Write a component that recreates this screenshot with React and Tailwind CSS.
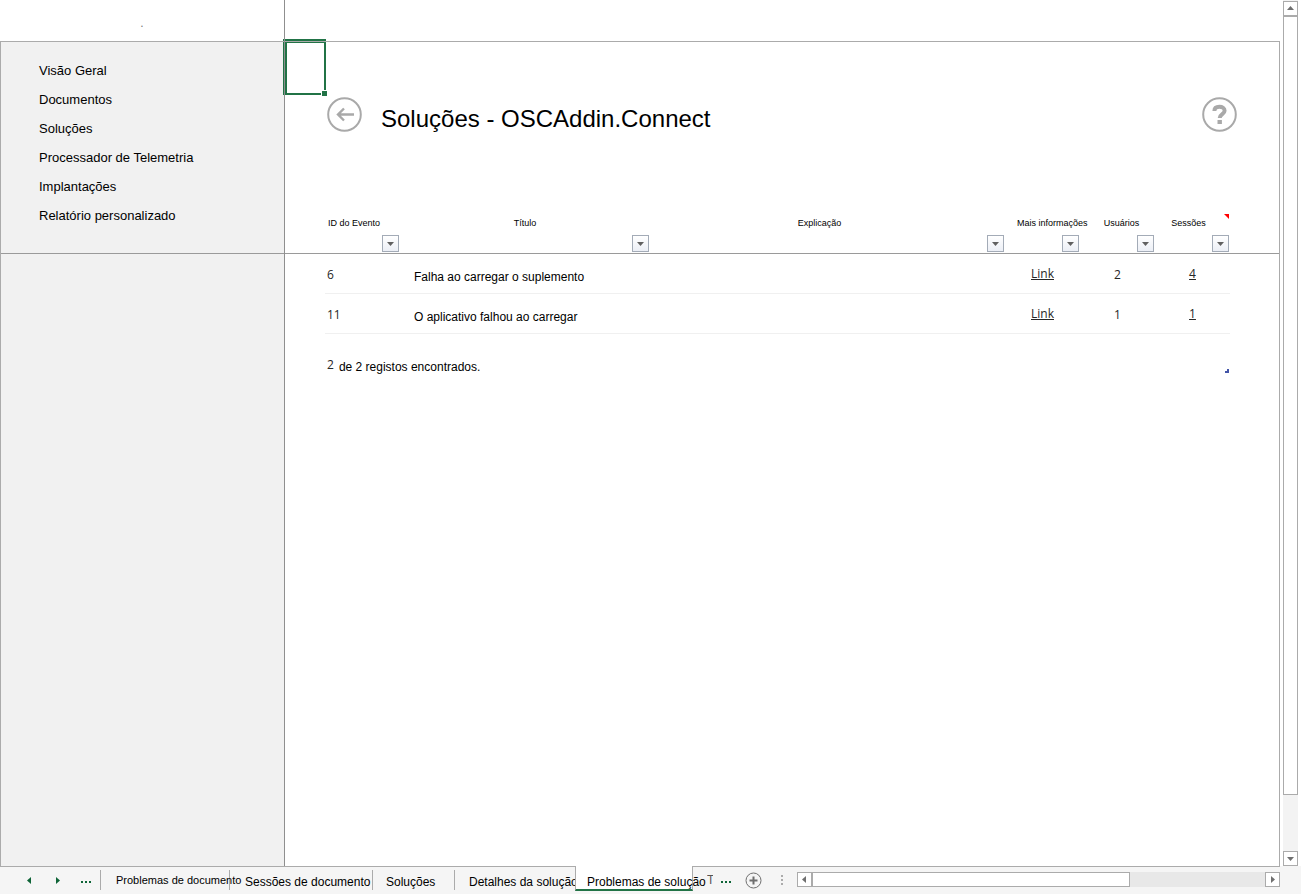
import clsx from 'clsx';

const navItems = [
  'Visão Geral',
  'Documentos',
  'Soluções',
  'Processador de Telemetria',
  'Implantações',
  'Relatório personalizado',
];

const columns = [
  { label: 'ID do Evento', align: 'text-left pl-[3px]' },
  { label: 'Título', align: 'text-center' },
  { label: 'Explicação', align: 'text-center pr-4' },
  { label: 'Mais informações', align: 'text-left pl-3' },
  { label: 'Usuários', align: 'text-center pl-2' },
  { label: 'Sessões', align: 'text-center pr-2' },
];

const rows = [
  { id: 6, title: 'Falha ao carregar o suplemento', users: 2, sessions: 4 },
  { id: 11, title: 'O aplicativo falhou ao carregar', users: 1, sessions: 1 },
];

const tabs = [
  { label: 'Problemas de documento', style: 'w-[129px] pl-[15px] text-[11px] leading-[20px]' },
  { label: 'Sessões de documento', style: 'w-[143px] pl-[15px] text-xs leading-[24px]' },
  { label: 'Soluções', style: 'w-[82px] pl-[13px] text-xs leading-[24px]' },
  { label: 'Detalhes da solução', style: 'w-[120px] pl-[14px] text-xs leading-[24px] border-r-0' },
];

const arrows = {
  up: 'M0 5h7L3.5 1z',
  down: 'M0 2h7L3.5 6z',
  left: 'M5 0v7L1 3.5z',
  right: 'M2 0v7L6 3.5z',
};

function Arrow({ dir, className }) {
  return (
    <svg viewBox="0 0 7 7" className={clsx('h-[7px] w-[7px]', className)} fill="currentColor">
      <path d={arrows[dir]} />
    </svg>
  );
}

function Dots() {
  return (
    <svg viewBox="0 0 10 7" className="h-[7px] w-[10px]" fill="currentColor" shapeRendering="crispEdges">
      <path d="M0 4h2v2H0zM4 4h2v2H4zM8 4h2v2H8z" />
    </svg>
  );
}

function ScrollButton({ dir, label }) {
  return (
    <button
      aria-label={label}
      className="flex h-[15px] w-[15px] shrink-0 items-center justify-center border border-[#ababab] bg-white text-[#6f6f6f]"
    >
      <Arrow dir={dir} />
    </button>
  );
}

function FilterButton({ label }) {
  return (
    <button
      aria-label={`Filtrar ${label}`}
      className="flex h-[17px] w-[17px] items-center justify-center border border-[#a3abb7] bg-linear-to-b from-white to-[#eceff6] text-[#606060]"
    >
      <Arrow dir="down" />
    </button>
  );
}

function Sidebar() {
  return (
    <aside className="flex w-[285px] shrink-0 flex-col border-x border-l-[#ababab] border-r-[#8f8f8f] bg-[#f1f1f1]">
      <nav className="h-[212px] border-b border-[#9a9a9a] pt-[14px] pl-[38px]">
        <ul>
          {navItems.map((item) => (
            <li key={item} className="text-[13px] leading-[29px]">
              <a href="#">{item}</a>
            </li>
          ))}
        </ul>
      </nav>
    </aside>
  );
}

function EventTable() {
  return (
    <table className="w-full table-fixed border-separate border-spacing-0">
      <colgroup>
        <col className="w-[40px]" />
        <col className="w-[75px]" />
        <col className="w-[250px]" />
        <col />
        <col className="w-[75px]" />
        <col className="w-[75px]" />
        <col className="w-[75px]" />
        <col className="w-[49px]" />
      </colgroup>
      <thead>
        <tr>
          <td className="border-b border-[#9a9a9a]" />
          {columns.map((col, i) => (
            <th key={col.label} className="relative border-b border-[#9a9a9a] p-0 pb-px font-normal">
              <div className={clsx('text-[9px] leading-[14px] whitespace-nowrap', col.align)}>{col.label}</div>
              <div className="mt-[5px] flex justify-end pr-px">
                <FilterButton label={col.label} />
              </div>
              {i === columns.length - 1 && (
                // comment indicator
                <svg viewBox="0 0 5 5" className="absolute -top-[2px] right-px h-[5px] w-[5px]" fill="#f00">
                  <path d="M0 0h5v5z" />
                </svg>
              )}
            </th>
          ))}
          <td className="border-b border-[#9a9a9a]" />
        </tr>
      </thead>
      <tbody className="font-['Open_Sans',sans-serif] text-xs text-[#262626]">
        {rows.map((row) => (
          <tr key={row.id} className="h-[40px]">
            <td />
            <td className="border-b border-[#f0f0f0] p-0 pt-[2px] pl-[2px]">{row.id}</td>
            <td className="border-b border-[#f0f0f0] p-0 pt-[6px] pl-[14px] font-['Liberation_Sans',Arial,sans-serif] whitespace-nowrap text-black">
              {row.title}
            </td>
            <td className="border-b border-[#f0f0f0] p-0" />
            <td className="border-b border-[#f0f0f0] p-0 text-center"><a href="#" className="underline">Link</a></td>
            <td className="border-b border-[#f0f0f0] p-0 pt-[2px] text-center">{row.users}</td>
            <td className="border-b border-[#f0f0f0] p-0 text-center"><a href="#" className="underline">{row.sessions}</a></td>
            <td />
          </tr>
        ))}
      </tbody>
      <tfoot className="text-xs">
        <tr className="h-[39px]">
          <td />
          <td colSpan={5} className="p-0 align-bottom">
            <div className="flex h-4 items-start gap-[5px] pl-[2px]">
              <span className="font-['Open_Sans',sans-serif] text-[#262626]">{rows.length}</span>
              <span className="pt-[2px]">de {rows.length} registos encontrados.</span>
            </div>
          </td>
          <td className="p-0 pr-px align-bottom">
            <svg viewBox="0 0 4 4" className="ml-auto h-1 w-1" fill="#4355a8">
              <path d="M2 0h2v4H0V2h2z" />
            </svg>
          </td>
          <td />
        </tr>
      </tfoot>
    </table>
  );
}

function SelectedCell() {
  return (
    <div className="absolute -top-[3px] -left-[2px] h-[56px] w-[43px] border-t-4 border-r-2 border-b-2 border-l-4 border-[#217346]">
      {/* pane lines stay visible over the outline */}
      <span className="absolute -top-[2px] -right-[2px] -left-[4px] h-px bg-[#ababab]" />
      <span className="absolute -top-[4px] -bottom-[2px] -left-[3px] w-px bg-[#8f8f8f]" />
      <span className="absolute -right-[3px] -bottom-[3px] h-[6px] w-[6px] border-t border-l border-white bg-[#217346]" />
    </div>
  );
}

function Report() {
  return (
    <main className="relative min-w-0 flex-1 border-r border-[#ababab]">
      <SelectedCell />
      <header className="flex h-[174px] items-start px-[42px] pt-[55px]">
        <button aria-label="Voltar" className="text-[#a9a9a9]">
          <svg viewBox="0 0 35 35" className="h-[35px] w-[35px]" fill="none" stroke="currentColor" strokeWidth="2">
            <circle cx="17.5" cy="17.5" r="16.3" />
            <path d="M27 17.5H11M17 11.5l-6 6 6 6" strokeWidth="2.4" />
          </svg>
        </button>
        <h1 className="mt-[5px] ml-[19px] text-2xl leading-[34px]">Soluções - OSCAddin.Connect</h1>
        <button aria-label="Ajuda" className="ml-auto text-[#a9a9a9]">
          <svg viewBox="0 0 35 35" className="h-[35px] w-[35px]" fill="none" stroke="currentColor">
            <circle cx="17.5" cy="17.5" r="16.3" strokeWidth="2" />
            <path d="M12.4 14c0-3 2.200-4.200 5-4.200 3 0 5.200 1.400 5.200 3.900 0 3.400-4.900 3.300-4.900 7.300" strokeWidth="4" />
            <path d="M15.500 23h4.400v4h-4.400z" fill="currentColor" stroke="none" />
          </svg>
        </button>
      </header>
      <EventTable />
    </main>
  );
}

function VerticalScrollbar() {
  return (
    <div className="flex w-[15px] shrink-0 flex-col bg-[#f3f3f3] pt-px">
      <ScrollButton dir="up" label="Rolar para cima" />
      <div className="flex-[14] border border-[#ababab] bg-white" />
      <div className="flex-1" />
      <ScrollButton dir="down" label="Rolar para baixo" />
    </div>
  );
}

function SheetBar() {
  return (
    <footer className="flex h-[28px] shrink-0 bg-[#f5f5f5] pr-[21px] whitespace-nowrap">
      <div className="flex border-t border-[#ababab]">
        <div className="mt-[3px] flex h-[20px] w-[101px] items-center border-r border-[#ababab] pl-[26px] text-[#0e6437]">
          <button aria-label="Planilha anterior"><Arrow dir="left" /></button>
          <button aria-label="Próxima planilha" className="ml-[21px]"><Arrow dir="right" /></button>
          <button aria-label="Mais planilhas à esquerda" className="ml-[20px]"><Dots /></button>
        </div>
        {tabs.map((tab) => (
          <button key={tab.label} className={clsx('mt-[3px] h-[20px] border-r border-[#ababab] text-left', tab.style)}>
            {tab.label}
          </button>
        ))}
      </div>
      <button className="relative h-[25px] w-[118px] border-x border-b-2 border-x-[#ababab] border-b-[#217346] bg-white pl-[11px] text-left text-xs leading-[32px]">
        Problemas de solução
      </button>
      <div className="flex min-w-0 flex-1 border-t border-[#ababab]">
        <button className="ml-[14px] h-[26px] w-[6px] overflow-hidden text-left text-xs leading-[26px] text-[#555]">T</button>
        <button aria-label="Mais planilhas à direita" className="ml-[8px] h-[26px] text-[#0e6437]"><Dots /></button>
        <button aria-label="Nova planilha" className="ml-[14px] h-[26px] text-[#6f6f6f]">
          <svg viewBox="0 0 17 17" className="h-[17px] w-[17px]" fill="none" stroke="currentColor">
            <circle cx="8.500" cy="8.500" r="7.500" />
            <path d="M8.500 4.500v8M4.500 8.500h8" strokeWidth="2" />
          </svg>
        </button>
        <svg viewBox="0 0 2 10" className="mt-[8px] ml-[19px] h-[10px] w-[2px]" fill="#ababab">
          <path d="M0 0h2v2H0zM0 4h2v2H0zM0 8h2v2H0z" />
        </svg>
        <div className="mt-[5px] ml-[14px] flex h-[15px] flex-1 bg-[#e8e8e8]">
          <ScrollButton dir="left" label="Rolar para a esquerda" />
          <div className="flex-[7] border border-[#ababab] bg-white" />
          <div className="flex-[3]" />
          <ScrollButton dir="right" label="Rolar para a direita" />
        </div>
      </div>
    </footer>
  );
}

export default function App() {
  return (
    <div className="flex h-screen flex-col bg-white font-['Liberation_Sans',Arial,sans-serif] text-black">
      <div className="flex min-h-0 flex-1 gap-[3px] pr-[3px]">
        <div className="flex min-w-0 flex-1 flex-col">
          <div className="h-[41px] w-[285px] border-r border-[#8f8f8f] pt-[14px] text-center text-xs leading-[18px] text-[#777]">
            .
          </div>
          <div className="flex flex-1 border-t border-[#ababab]">
            <Sidebar />
            <Report />
          </div>
        </div>
        <VerticalScrollbar />
      </div>
      <SheetBar />
    </div>
  );
}
